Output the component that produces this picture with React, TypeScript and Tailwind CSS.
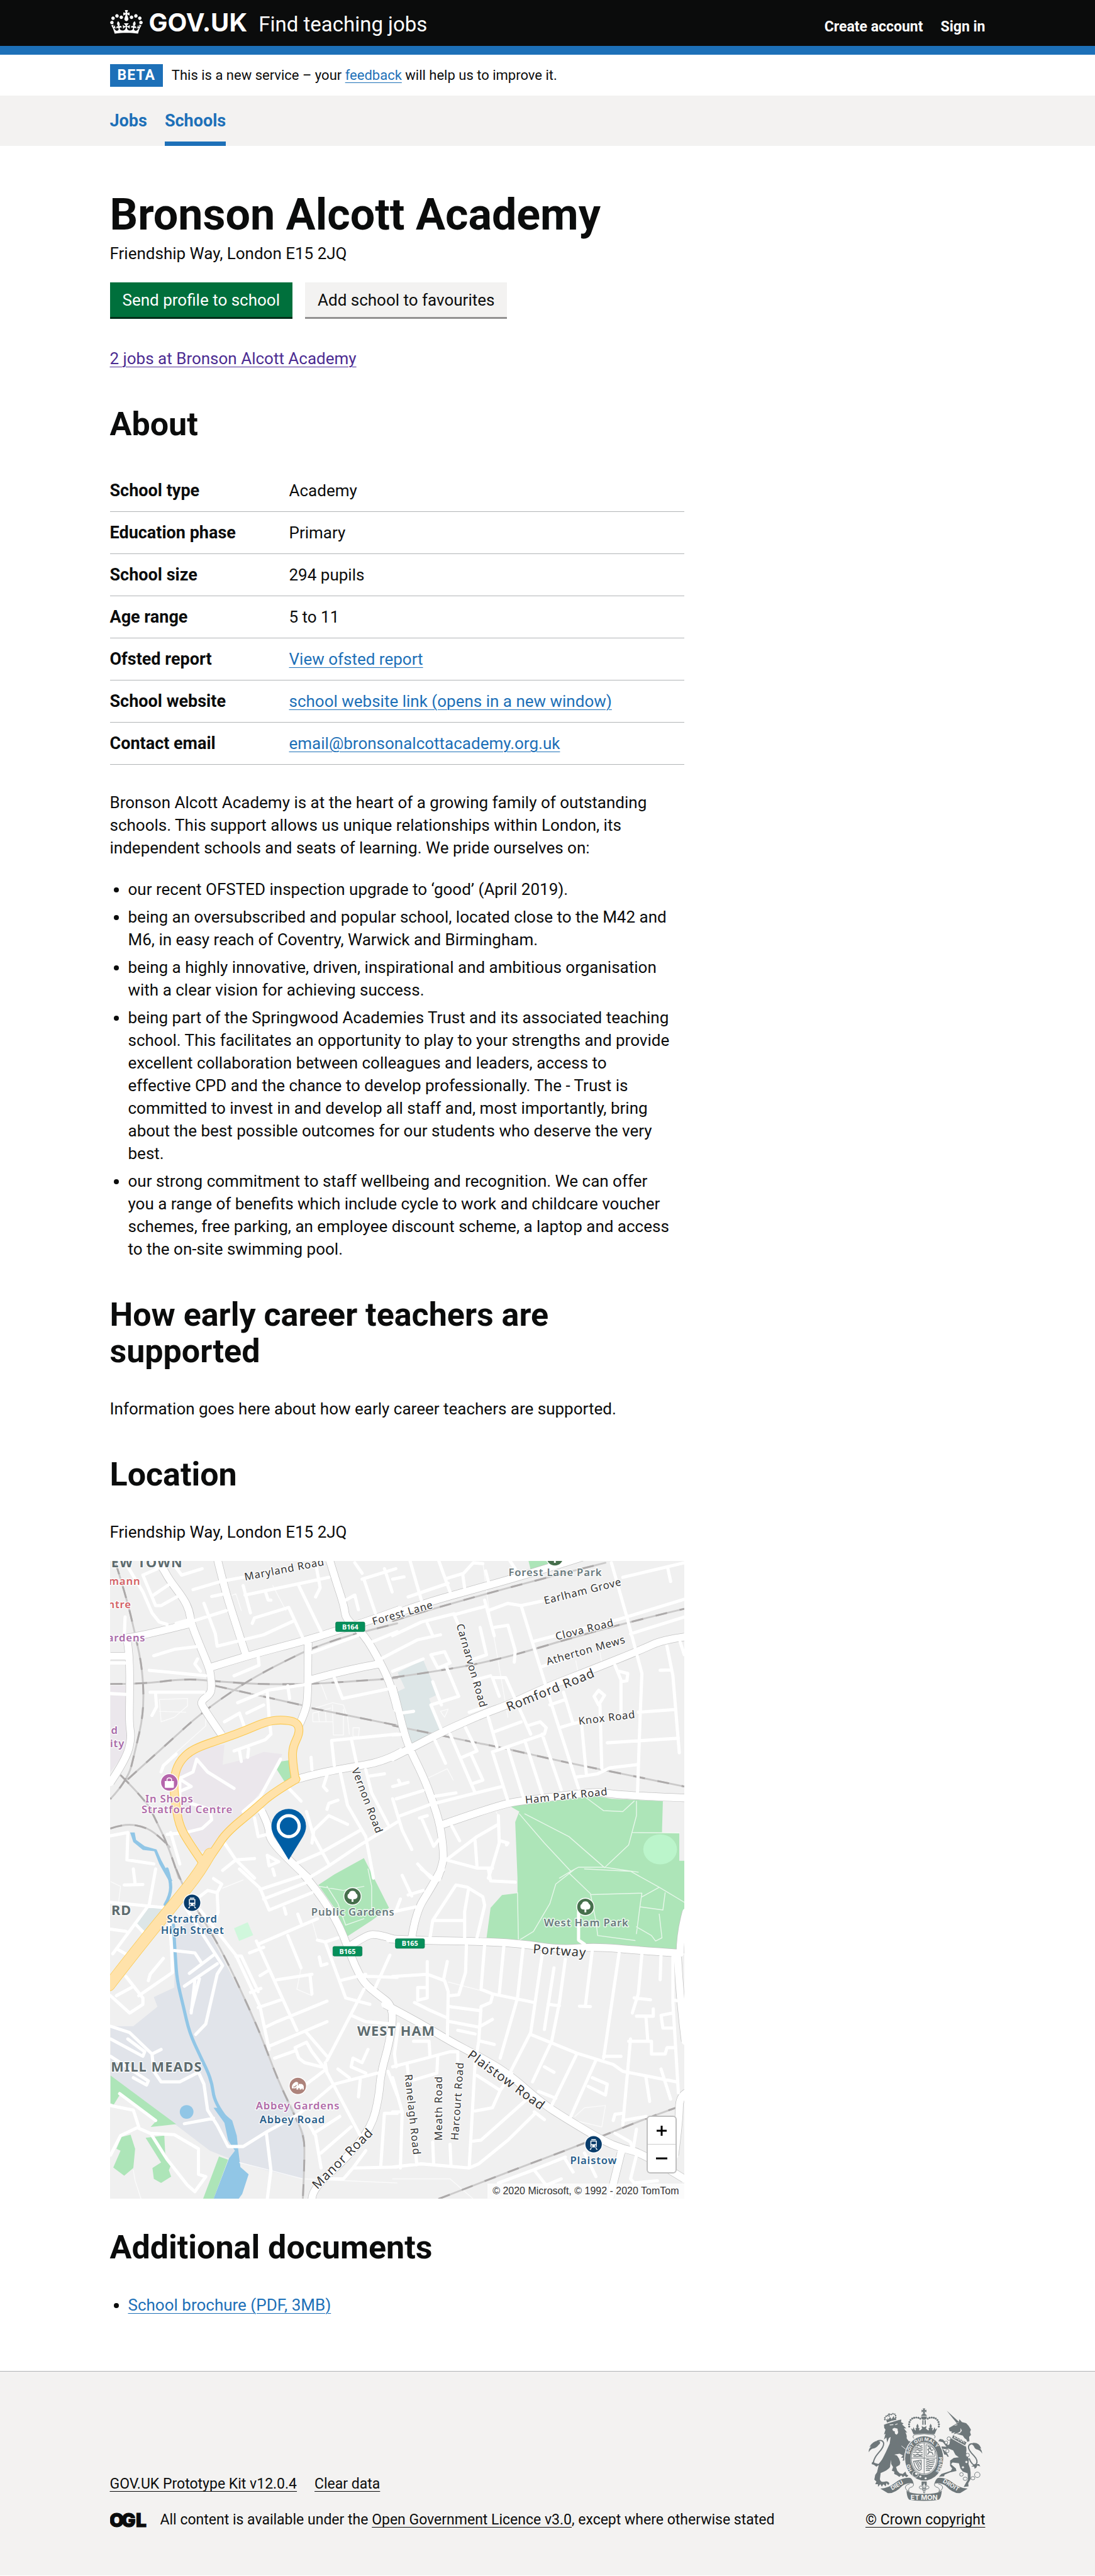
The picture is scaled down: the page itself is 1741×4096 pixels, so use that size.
import React from "react";

/* ---------- Street map ---------- */

type Tile = "nw" | "ne" | "sw" | "se";

const TILES: Record<Tile, [number, number, number, number]> = {
  nw: [-10, -24, 0.40816, 0.45918],
  ne: [620, -24, 0.42092, 0.45918],
  sw: [-10, 676, 0.40816, 0.47194],
  se: [620, 676, 0.42092, 0.47194],
};

function place(tile: Tile, x: number, y: number): [number, number] {
  const [ox, oy, sx, sy] = TILES[tile];
  return [Math.round(ox + x * sx), Math.round(oy + y * sy)];
}

function points(tile: Tile, text: string): [number, number][] {
  return text.split(" ").map((pair) => {
    const [x, y] = pair.split(",").map(Number);
    return place(tile, x, y);
  });
}

function straight(tile: Tile, text: string) {
  return points(tile, text)
    .map(([x, y], i) => `${i ? "L" : "M"}${x} ${y}`)
    .join("");
}

function smooth(tile: Tile, text: string) {
  const p = points(tile, text);
  let d = `M${p[0][0]} ${p[0][1]}`;
  for (let i = 1; i < p.length - 1; i++) {
    const mx = (p[i][0] + p[i + 1][0]) / 2;
    const my = (p[i][1] + p[i + 1][1]) / 2;
    d += `Q${p[i][0]} ${p[i][1]} ${i === p.length - 2 ? `${p[i + 1][0]} ${p[i + 1][1]}` : `${mx} ${my}`}`;
  }
  if (p.length === 2) d += `L${p[1][0]} ${p[1][1]}`;
  return d;
}

type Shapes = Partial<Record<Tile, string[]>>;

function all(shapes: Shapes, draw: (tile: Tile, text: string) => string) {
  return (Object.keys(shapes) as Tile[])
    .flatMap((tile) => shapes[tile]!.map((text) => draw(tile, text)))
    .join("");
}

const AREAS: { fill: string; shapes: Shapes }[] = [
  {
    fill: "#ebe7ec",
    shapes: {
      nw: [
        "420,1000 500,950 640,930 630,1025 750,1000 850,965 950,975 900,1080 760,1240 640,1350 560,1440 510,1440 430,1330 390,1200 385,1080",
        "28,650 105,650 120,950 28,1060",
      ],
    },
  },
  {
    fill: "#e1e4ea",
    shapes: {
      sw: [
        "370,300 480,220 560,300 640,430 800,700 900,930 1020,1130 1070,1240 1060,1440 880,1405 720,1365 560,1310 380,1190 28,960 28,730 150,730 280,640 260,595 370,550",
      ],
    },
  },
  {
    fill: "#dde6e7",
    shapes: {
      ne: ["25,585 160,525 235,690 190,710 255,865 95,930 20,680 65,660"],
      sw: ["165,250 225,178 320,180 310,240 215,295"],
    },
  },
  {
    fill: "#ade5b8",
    shapes: {
      nw: ["920,1050 945,1010 990,1005 1005,1090 965,1110"],
      ne: [
        "610,1225 700,1210 1060,1175 1140,1190 1410,1200 1405,1350 1495,1352 1495,1485 1520,1485 1520,1568 650,1568 640,1300 660,1250",
        "708,50 870,50 720,95",
      ],
      sw: [
        "1145,75 1230,25 1390,-50 1525,180 1430,240 1295,315 1230,180",
        "28,960 380,1187 243,1200 275,1170 80,1045 45,1095 28,1090",
        "85,1245 135,1235 160,1300 150,1390 100,1425 42,1388 80,1310 60,1300",
        "215,1250 315,1240 320,1320 350,1380 340,1400 352,1430 300,1460 260,1440 252,1390 300,1365",
        "610,1338 660,1352 580,1534 525,1534",
      ],
      se: ["650,-5 1520,-5 1520,210 1485,378 1060,350 910,362 650,330 490,322 510,180 570,120 650,112"],
    },
  },
  { fill: "#d0f7dc", shapes: { sw: ["690,275 765,248 795,308 718,335"] } },
  {
    fill: "#91c6e6",
    shapes: {
      nw: ["133,1350 158,1350 165,1385 210,1415 275,1430 300,1480 360,1580 340,1580 290,1500 262,1440 200,1432 150,1395"],
      sw: ["600,1110 680,1170 705,1240 712,1300 725,1385 770,1420 735,1510 715,1534 580,1534 665,1345 695,1310 660,1260 640,1180 580,1110"],
    },
  },
];

const RIVER: Shapes = {
  sw: ["330,0 350,50 350,120 320,165", "365,260 375,400 385,520 420,640 450,760 510,870 570,980 585,1090 650,1160"],
};

const RAIL: Shapes = {
  nw: [
    "28,640 200,640 430,615 620,630 850,642 1100,640 1300,630 1568,612",
    "590,650 800,690 1060,742",
    "1110,755 1300,790 1568,838",
    "120,1095 350,910 520,775 730,645 900,560 1060,490 1110,470 1250,425 1390,390 1568,350",
    "55,60 110,220 160,400 200,580 205,780 160,960 120,1100 28,1190",
    "80,1075 220,1200 270,1290 340,1420 395,1568",
    "28,1330 100,1308 200,1320 280,1360 345,1420",
  ],
  ne: [
    "0,838 220,880 400,915 550,940 900,1015 1280,1085 1520,1130",
    "0,340 460,210 1110,60",
    "0,610 300,570 560,520 750,470 900,430 1250,340 1520,280",
  ],
  sw: ["380,0 430,110 500,200 620,370 720,550 830,760 920,970 1020,1150 1060,1230 1072,1310 1062,1534"],
  se: ["240,1534 600,1410 1000,1275 1320,1160 1475,1110"],
};

const MAJOR: Shapes = {
  nw: [
    "270,40 310,90 340,140 420,230 450,290 460,350 500,440 555,560 565,600 570,660 560,690 515,720 520,750 625,885",
    "110,420 200,410 440,355",
    "115,420 130,500 130,700 128,830 140,900 110,1000 28,1110",
    "28,507 110,507",
    "600,40 640,180 680,300 755,500",
    "1205,50 1240,150 1285,270 1290,330 1390,400 1480,540 1540,660 1568,760",
    "560,562 760,505 1090,430 1240,385 1400,345 1580,285",
    "1090,430 1088,500 1088,700 1075,770 1040,840",
    "1100,620 1280,575 1470,545",
    "1030,1095 1130,1070 1300,1040 1500,1010 1590,965",
    "840,1250 880,1320 880,1380 985,1480 1090,1568",
  ],
  ne: [
    "0,310 160,255 480,175 800,90 1000,30",
    "0,990 100,945 260,870 480,780 600,740 800,655 1060,565 1290,480 1410,430 1520,415",
    "0,660 20,720 50,840 85,945 160,1080 210,1200 250,1320 265,1450 262,1500 235,1568",
    "250,1315 560,1215 700,1195 1060,1155 1130,1165 1280,1175 1520,1185",
  ],
  sw: [
    "1050,10 1120,80 1200,180 1260,270 1300,360 1340,450 1390,530 1460,580 1550,640 1530,800 1480,950 1470,1060 1430,1200 1300,1340 1110,1490 1110,1534",
    "1310,360 1400,310 1460,300 1568,330",
  ],
  se: [
    "255,0 200,90 120,200 100,320",
    "-20,325 170,332 400,335 660,345 880,375 1050,360 1300,380 1500,392",
    "-40,630 130,710 300,800 450,870 600,950 780,1090 900,1160 1100,1265 1200,1300 1300,1320 1520,1440",
    "1500,392 1500,300 1530,200",
    "1485,400 1500,620 1525,800",
    "1530,1040 1495,1060 1495,1160 1470,1330",
    "1190,1320 1130,1534",
  ],
};

const TRUNK: Shapes = {
  nw: [
    "1022,1098 1020,1090 1005,1000 1008,940 1045,870 1030,820 940,810 860,820 760,860 640,900 520,935 440,970 385,1030 365,1110 375,1200 395,1310 440,1390 520,1490",
    "1025,1095 900,1160 800,1240 650,1350 590,1430 520,1520",
  ],
};

const TRUNK_WIDE: Shapes = { sw: ["560,-70 510,10 380,150 200,340 20,540"] };

const MINOR: Shapes = {
  nw: [
    "28,540 115,540", "28,685 115,690", "120,80 200,200 250,300 290,345 330,355", "200,120 280,90 240,40",
    "200,120 270,265 300,265 400,215", "250,220 340,165", "380,350 440,335", "470,340 650,290",
    "470,190 620,150 740,130", "570,222 640,210", "530,255 590,400 600,460 850,405 1010,340",
    "360,60 410,120 520,90", "740,170 780,300", "750,215 1200,130", "860,200 875,240 890,240",
    "1130,60 1155,180 1130,225", "1040,170 1160,390", "790,350 800,325 985,275 1060,420",
    "260,505 370,475 490,462", "235,575 540,600", "495,520 480,545 510,580", "820,510 825,550 690,600",
    "240,680 530,680", "270,690 275,750 250,790", "710,730 870,670 1090,640", "760,780 850,740",
    "870,680 880,800 890,880 860,905 690,960", "980,650 990,710", "640,820 720,780 745,840",
    "720,960 730,1010", "770,950 765,990", "1110,490 1380,400", "1230,610 1275,710 1520,665",
    "1340,60 1380,110", "1380,140 1560,90", "1390,140 1450,300", "1500,90 1540,200",
    "1290,240 1340,215 1360,285", "1430,440 1568,390", "1480,520 1568,480", "1215,910 1568,880",
    "1215,910 1230,1030", "1320,900 1350,1020", "1105,990 1110,1050",
    "1260,1050 1300,1220 1400,1370 1415,1450 1440,1568", "1400,1050 1430,1160 1520,1310",
    "1420,1080 1500,1070", "1190,1075 1170,1130 1190,1150", "1568,1300 1350,1420 1200,1510 1090,1568",
    "1370,1340 1150,1450 1020,1500", "1120,1370 1200,1500", "1110,1400 1120,1340 1200,1270 1300,1310",
    "1190,1240 1200,1210 1250,1195", "640,1400 700,1480 800,1568", "870,1460 930,1490 880,1510 870,1460",
    "985,1140 1050,1200", "1080,1250 1120,1370", "800,1280 820,1370 870,1360", "700,1480 800,1475",
    "28,1365 120,1350 115,1480 260,1500", "350,1350 400,1500",
    "330,1360 430,1350 520,1330 570,1290 560,1240 460,1210", "400,1180 400,1090 470,1060 490,1000 550,1060 690,1140",
    "300,1060 310,1030 380,975", "410,1100 460,1130 410,1150", "940,1000 830,1180 740,1250",
    "630,1530 700,1480", "100,420 105,320",
  ],
  ne: [
    "90,50 150,240", "0,140 60,128", "80,225 290,160", "240,50 300,200", "285,135 370,110 420,60 470,65",
    "365,120 375,180", "485,100 500,150", "610,50 640,90", "0,410 150,345 320,305",
    "180,350 210,410", "250,405 130,430 0,490", "320,310 480,270", "320,310 340,350", "480,240 530,410",
    "500,290 600,255 670,265 780,245", "670,265 830,740 970,1140", "1140,60 1220,320 1300,590 1290,800 1275,1180",
    "1200,130 1520,60", "1435,90 1450,150", "740,435 1180,330 1520,235", "1240,400 1520,320", "770,560 900,520",
    "0,580 160,520", "200,500 270,485 300,540 235,565 200,500", "280,560 345,700 200,740 255,860",
    "210,630 255,740", "455,370 490,500 400,530", "530,370 600,360 640,480 635,535", "430,620 510,600",
    "555,700 520,610 590,610 720,880", "400,775 480,750", "500,800 545,940", "380,850 440,960 360,990",
    "300,880 430,1160", "410,980 470,1100 420,1115", "220,910 275,1020", "600,1200 520,965 790,880 800,850 770,820 700,840",
    "530,870 670,820", "600,945 680,1175", "690,910 780,1165", "780,880 880,1145", "820,740 900,715",
    "890,680 940,830 870,850", "940,830 980,820", "985,840 1010,1070", "1080,740 1090,1045",
    "1075,740 1050,700 1075,670 1105,695 1075,740", "960,1085 1070,1070 1130,1040 1270,1025",
    "1160,550 1190,620 1190,780", "1180,580 1225,590 1220,625 1190,630", "1280,775 1470,762",
    "1120,922 1490,900", "1430,460 1460,600 1495,970", "1395,575 1450,572", "1500,440 1520,500",
    "40,780 110,770", "0,885 60,880", "0,1130 80,1110", "30,1100 40,1120", "20,1190 160,1150",
    "0,1190 50,1340 100,1430", "40,1270 200,1215 570,1130", "200,1180 330,1160", "310,1320 350,1390",
    "140,1280 180,1270", "155,1290 215,1415 240,1385", "280,1480 440,1370 550,1310",
    "550,1270 555,1400 520,1510 500,1568", "280,1480 440,1520 520,1520", "430,1390 440,1510",
    "560,1390 600,1400 595,1410", "130,1500 200,1568",
  ],
  sw: [
    "28,155 320,180", "150,0 160,70", "100,75 200,72", "270,0 235,165 40,395", "160,255 210,300",
    "28,280 110,290", "60,370 120,400", "345,250 355,380 360,480 180,590", "230,520 240,490 310,415",
    "28,590 130,670 200,630 200,600 110,500", "140,550 60,590", "370,380 480,390 515,435", "450,485 580,400",
    "430,180 630,450 600,490 540,720 485,770", "510,190 700,400 830,640 880,840",
    "580,45 625,70 600,110 605,200 590,240", "505,130 550,100 600,110", "700,405 730,405 820,570",
    "780,575 835,555", "720,0 830,90 880,190 1110,110", "830,95 1060,30", "850,140 1090,60", "900,0 910,30",
    "960,180 970,210", "820,350 1140,230", "1035,210 1050,250", "810,335 1030,750", "775,390 850,365",
    "980,310 1050,460", "830,495 880,470", "920,515 1110,490", "820,645 950,605", "860,735 920,710 1190,615",
    "880,825 1070,755 1190,710", "910,880 1020,845", "1160,920 1070,900 1040,880 1020,830 1080,805 1110,850 1180,930 1370,1240",
    "1080,760 1190,870", "1190,890 1390,560", "1180,900 1190,950", "1080,1000 1170,940",
    "1040,1140 1230,1000 1460,950", "1090,1180 1130,1240 1160,1390", "1120,1230 1260,1150", "1160,1320 1320,1200",
    "1140,330 1180,340 1290,600 1420,630", "1180,340 1250,320", "1150,410 1160,450 1190,440", "1260,520 1400,490",
    "1320,680 1400,710 1540,720", "1370,500 1440,500 1568,505", "1530,400 1450,550", "1250,930 1310,970",
    "1410,840 1380,900 1330,880 1320,920 1400,950", "1370,980 1360,1060", "1568,1135 1500,1135 1480,1380",
    "1330,1390 1568,1385", "1400,1310 1330,1390 1280,1440 1180,1440", "1520,940 1568,1050",
    "28,730 130,760 250,860 300,840", "28,790 200,870 210,850 120,790", "250,860 260,940 300,990 400,990 490,950",
    "28,870 230,985 220,1005 150,970", "500,945 530,1000 550,1120 600,1190 660,1290 740,1290 870,1220 1040,1140",
    "425,1185 580,1160", "865,1230 890,1400 870,1534", "28,1100 150,1120 180,1200 80,1240 28,1330",
    "180,1205 240,1230 370,1235 500,1300 500,1420 540,1430 480,1500 440,1470 330,1350 250,1240", "75,1045 270,1170",
    "425,545 600,440", "480,520 460,670", "505,510 460,660", "1100,500 1110,580",
  ],
  se: [
    "50,30 100,125", "0,200 120,175", "20,190 40,140", "80,120 160,100", "150,0 230,55", "500,0 510,55 640,62",
    "195,320 210,240 330,75 390,85 470,130 480,170 440,320", "395,100 375,200 375,330", "220,240 370,240",
    "385,350 380,480 345,585 300,590", "0,500 180,490 270,520 290,570 285,790", "180,430 180,600 130,610 130,550 180,550",
    "115,620 200,660 280,690", "285,430 265,510", "480,350 460,560 520,580 740,620", "580,360 555,580",
    "680,370 650,600 560,880", "780,400 720,760 610,950", "840,460 790,745", "900,420 870,620 830,800 730,990",
    "810,630 870,635", "1040,380 1005,635", "975,638 1030,640", "1180,390 1100,880", "1100,870 1190,870",
    "1300,395 1280,580 1250,670", "1260,600 1345,608", "1400,395 1395,515", "1460,410 1460,620 1480,900 1490,1040",
    "1470,610 1500,615", "720,770 960,855 1150,910 1200,940 1480,990", "960,860 830,1100", "1060,890 930,1150",
    "790,920 840,945", "760,1035 850,1065", "1020,1010 1110,1050 1120,1000 1040,970", "300,640 460,660",
    "300,710 450,735 520,700", "520,590 510,620 460,640 450,800 430,900 400,1390", "340,750 430,768",
    "460,800 530,815", "0,920 130,890 300,850 340,850 340,890", "110,800 190,800 195,870", "110,980 230,950 235,870",
    "75,910 80,950", "0,970 50,1130 40,1390", "0,1130 50,1130", "30,720 10,860 20,920",
    "0,1385 150,1370 400,1390 450,1370 600,1260 740,1140", "440,960 560,1030 520,1110 430,1125", "560,1030 620,950",
    "420,1265 460,1260 700,1070", "740,1130 790,1165", "210,1270 215,1370", "300,1280 305,1375",
    "1230,800 1350,800 1350,860 1420,860 1430,830 1470,830", "1240,790 1200,1190", "1270,685 1360,685 1360,650",
    "1320,690 1330,800", "1460,670 1400,680 1410,740 1460,740", "1320,970 1340,1080", "1400,930 1450,1070",
    "1150,1170 1160,1140 1200,1135", "1200,1170 1320,1150", "1160,1230 1240,1270 1250,1300", "1270,1210 1255,1300",
    "1270,1330 1240,1440 1260,1460 1380,1450", "550,1460 730,1400 900,1340", "740,1400 800,1470 880,1440",
    "900,1350 940,1410", "1000,1320 1060,1430", "120,1330 125,1375", "970,200 970,330 1000,350",
  ],
};

const PATHS: Shapes = {
  nw: [
    "290,715 440,710 440,745 370,800 300,820 290,715", "290,770 430,775", "1115,820 1115,780 1210,755",
    "1110,760 1220,730 1280,740 1300,800 1310,880", "1220,740 1225,885 1280,885 1280,760", "1115,820 1220,820",
    "1145,770 1150,820", "1180,765 1185,820", "1160,640 1190,715", "1330,850 1365,850 1360,890 1330,890 1330,850",
    "900,170 970,290", "540,780 540,840 350,990", "640,230 700,210 730,290",
  ],
  ne: [
    "690,1260 920,1370 1105,1518 1230,1410 1270,1270 1270,1200", "660,1260 790,1400 930,1535 870,1568",
    "1010,1185 1100,1245 1200,1250 1260,1200", "1250,1350 1495,1352", "930,1535 970,1515 1105,1515 1280,1540",
    "470,60 500,260 600,800", "170,1095 285,1045 315,1100", "955,530 970,600", "1080,490 1090,540",
    "250,770 290,760 270,800 250,770", "540,1250 550,1270",
  ],
  se: [
    "660,330 735,290 820,160 850,70 950,0", "920,20 1030,115 1060,240 1070,310 1265,332",
    "1035,118 1300,112 1290,170 1270,300", "1000,0 1240,10 1390,85 1520,155", "1390,85 1300,130",
    "1420,110 1410,190 1290,175", "1270,270 1350,310 1370,335 1405,320 1390,210", "650,110 655,330",
    "950,1150 1000,1110 1110,1100 1090,1200 950,1170", "0,1440 300,1440 420,1534", "290,525 480,570",
  ],
  sw: [
    "1150,80 1280,100 1390,80", "1410,0 1430,80 1430,180", "1190,80 1250,160 1290,260 1390,230",
    "630,90 740,50", "1110,240 1140,330", "30,60 80,80 70,150", "1050,460 1030,560 1110,590",
    "150,1400 160,1450 190,1534", "720,1365 1060,1440 1568,1460",
  ],
};

type Label = {
  tile: Tile;
  text: string;
  from: [number, number];
  to: [number, number];
  size?: number;
  color?: string;
  weight?: number;
};

const LABELS: Label[] = [
  { tile: "nw", text: "EW TOWN", from: [24, 82], to: [420, 82], size: 30, color: "#5d6b6e", weight: 700 },
  { tile: "nw", text: "Maryland Road", from: [742, 147], to: [1187, 70] },
  { tile: "nw", text: "Forest Lane", from: [1428, 362], to: [1775, 275] },
  { tile: "nw", text: "Vernon Road", from: [1320, 1045], to: [1455, 1362] },
  { tile: "nw", text: "mann", from: [34, 165], to: [172, 165], color: "#d45f63", weight: 600 },
  { tile: "nw", text: "ntre", from: [30, 277], to: [122, 277], color: "#d45f63", weight: 600 },
  { tile: "nw", text: "ardens", from: [32, 438], to: [194, 438], color: "#a869a8", weight: 600 },
  { tile: "nw", text: "d", from: [30, 880], to: [68, 880], color: "#a869a8", weight: 600 },
  { tile: "nw", text: "ity", from: [30, 940], to: [98, 940], color: "#a869a8", weight: 600 },
  { tile: "nw", text: "In Shops", from: [225, 1206], to: [460, 1206], color: "#b06ba9", weight: 600 },
  { tile: "nw", text: "Stratford Centre", from: [217, 1258], to: [660, 1258], color: "#b06ba9", weight: 600 },
  { tile: "ne", text: "Forest Lane Park", from: [625, 125], to: [1068, 125], color: "#68797d", weight: 600 },
  { tile: "ne", text: "Earlham Grove", from: [790, 262], to: [1198, 165] },
  { tile: "ne", text: "Clova Road", from: [848, 432], to: [1160, 360] },
  { tile: "ne", text: "Atherton Mews", from: [803, 552], to: [1222, 440] },
  { tile: "ne", text: "Romford Road", from: [605, 772], to: [1058, 606], size: 28 },
  { tile: "ne", text: "Knox Road", from: [968, 836], to: [1270, 802] },
  { tile: "ne", text: "Carnarvon Road", from: [330, 352], to: [458, 760] },
  { tile: "ne", text: "Ham Park Road", from: [685, 1212], to: [1128, 1170] },
  { tile: "sw", text: "RD", from: [30, 213], to: [140, 213], size: 30, color: "#5d6b6e", weight: 700 },
  { tile: "sw", text: "MILL MEADS", from: [32, 940], to: [518, 940], size: 30, color: "#5d6b6e", weight: 700 },
  { tile: "sw", text: "WEST HAM", from: [1332, 776], to: [1792, 776], size: 30, color: "#5d6b6e", weight: 700 },
  { tile: "sw", text: "Stratford", from: [343, 247], to: [588, 247], color: "#285f8c", weight: 600 },
  { tile: "sw", text: "High Street", from: [314, 302], to: [622, 302], color: "#285f8c", weight: 600 },
  { tile: "sw", text: "Public Gardens", from: [1125, 218], to: [1535, 218], color: "#68797d", weight: 600 },
  { tile: "sw", text: "Abbey Gardens", from: [826, 1116], to: [1242, 1116], color: "#b06ba9", weight: 600 },
  { tile: "sw", text: "Abbey Road", from: [838, 1182], to: [1168, 1182], color: "#285f8c", weight: 600 },
  { tile: "sw", text: "Manor Road", from: [1140, 1490], to: [1440, 1228], size: 28 },
  { tile: "se", text: "West Ham Park", from: [805, 268], to: [1212, 268], color: "#68797d", weight: 600 },
  { tile: "se", text: "Portway", from: [715, 392], to: [1022, 408], size: 28 },
  { tile: "se", text: "Plaistow Road", from: [395, 878], to: [765, 1118], size: 28 },
  { tile: "se", text: "Plaistow", from: [938, 1370], to: [1158, 1370], color: "#285f8c", weight: 600 },
  { tile: "se", text: "Ranelagh Road", from: [65, 957], to: [108, 1328] },
  { tile: "se", text: "Meath Road", from: [256, 1268], to: [260, 958] },
  { tile: "se", text: "Harcourt Road", from: [342, 1268], to: [368, 892] },
];

function MapLabel({ tile, text, from, to, size = 23, color = "#333333", weight = 400 }: Label) {
  const [x1, y1] = place(tile, from[0], from[1]);
  const [x2, y2] = place(tile, to[0], to[1]);
  const x = Math.round((x1 + x2) / 2);
  const y = Math.round((y1 + y2) / 2);
  const angle = Math.round((Math.atan2(y2 - y1, x2 - x1) * 180) / Math.PI);
  return (
    <text
      transform={`translate(${x} ${y}) rotate(${angle})`}
      textAnchor="middle"
      fontSize={size}
      fontWeight={weight}
      fill={color}
      stroke="#ffffff"
      strokeWidth="4"
      strokeOpacity="0.8"
      strokeLinejoin="round"
      paintOrder="stroke"
      className="tracking-wider"
    >
      {text}
    </text>
  );
}

function Shield({ x, y, text }: { x: number; y: number; text: string }) {
  return (
    <g>
      <rect x={x} y={y} width="64" height="21" rx="3" fill="#058f5a" stroke="#04764a" />
      <text x={x + 32} y={y + 16} textAnchor="middle" fontSize="15" fontWeight="700" fill="#ffffff">
        {text}
      </text>
    </g>
  );
}

function Disc({ x, y, color, children }: { x: number; y: number; color: string; children: React.ReactNode }) {
  return (
    <g transform={`translate(${x} ${y})`}>
      <circle r="19" fill={color} stroke="#ffffff" strokeWidth="2" />
      {children}
    </g>
  );
}

function Train() {
  return (
    <g>
      <path d="M-5 -11H5V-9H-5ZM-7 -8H7V5Q7 7 5 7H-5Q-7 7 -7 5ZM-6 8L-9 12H-6L-4 8ZM6 8L9 12H6L4 8Z" fill="#ffffff" />
      <path d="M-5 -6H5V0H-5Z" fill="#083c6b" />
      <circle cx="-4" cy="4" r="1.5" fill="#083c6b" />
      <circle cx="4" cy="4" r="1.5" fill="#083c6b" />
    </g>
  );
}

function Tree() {
  return (
    <path
      d="M-2 12V6H-5Q-11 5 -11 -1Q-11 -5 -8 -6Q-6 -12 0 -12Q6 -12 8 -6Q11 -5 11 -1Q11 5 5 6H2V12Z"
      fill="#ffffff"
    />
  );
}

function StreetMap() {
  const rail = all(RAIL, smooth);
  const major = all(MAJOR, smooth);
  const trunk = all(TRUNK, smooth);
  const trunkWide = all(TRUNK_WIDE, smooth);
  return (
    <div className="relative w-full overflow-hidden bg-[#f0f0f0]">
      <svg
        viewBox="0 0 1260 1400"
        className="block w-full font-['Noto_Sans',sans-serif]"
        role="img"
        aria-label="Map of the area around Friendship Way, London"
      >
        <rect width="1260" height="1400" fill="#f0f0f0" />
        {AREAS.map((area) => (
          <path key={area.fill} d={all(area.shapes, (t, p) => straight(t, p) + "Z")} fill={area.fill} />
        ))}
        <ellipse cx="1207" cy="633" rx="37" ry="33" fill="#bbf5cb" />
        <ellipse cx="168" cy="1209" rx="15" ry="15" fill="#91c6e6" />
        <g fill="none" strokeLinecap="round" strokeLinejoin="round">
          <path d={all(RIVER, smooth)} stroke="#91c6e6" strokeWidth="7" />
          <path d={all(PATHS, straight)} stroke="#ffffff" strokeWidth="2" strokeOpacity="0.7" />
          <path d={rail} stroke="#cbcaca" strokeWidth="4" />
          <path d={rail} stroke="#aca9a9" strokeWidth="4" strokeDasharray="26 28" strokeLinecap="butt" />
          <path d={major} stroke="#c2c2c2" strokeWidth="18" strokeLinecap="butt" />
          <path d={all(MINOR, straight)} stroke="#ffffff" strokeWidth="7" />
          <path d={major} stroke="#ffffff" strokeWidth="16" />
          <path d={trunk} stroke="#fbc94f" strokeWidth="19" />
          <path d={trunkWide} stroke="#fbc94f" strokeWidth="26" />
          <path d={trunk} stroke="#ffe2aa" strokeWidth="16" />
          <path d={trunkWide} stroke="#ffe2aa" strokeWidth="24" />
        </g>
        <Disc x={130} y={486} color="#b566ac">
          <path d="M-10 -3H10V10Q10 12 8 12H-8Q-10 12 -10 10Z" fill="#ffffff" />
          <path d="M-5 -2V-6Q-5 -10 0 -10Q5 -10 5 -6V-2" fill="none" stroke="#ffffff" strokeWidth="2" />
        </Disc>
        <Disc x={180} y={750} color="#083c6b"><Train /></Disc>
        <Disc x={1061} y={1280} color="#083c6b"><Train /></Disc>
        <Disc x={532} y={736} color="#466f4c"><Tree /></Disc>
        <Disc x={1043} y={759} color="#466f4c"><Tree /></Disc>
        <Disc x={976} y={-8} color="#466f4c"><Tree /></Disc>
        <Disc x={412} y={1152} color="#ad837b">
          <path d="M-13 5Q-14 -2 -9 -6Q-4 -11 0 -8L3 -4Q11 -6 13 1V8H10V5L7 8H4V5H1V8H-3V3Q-6 7 -9 5L-11 6Z" fill="#ffffff" />
          <path d="M-10 2Q-5 3 -3 -2M1 -7V-1" fill="none" stroke="#ad837b" strokeWidth="1.5" />
        </Disc>
        {LABELS.map((label) => (
          <MapLabel key={label.tile + label.text} {...label} />
        ))}
        <Shield x={495} y={134} text="B164" />
        <Shield x={489} y={846} text="B165" />
        <Shield x={626} y={829} text="B165" />
        <path d="M392 656L361 605Q354 593 354 582A38 38 0 0 1 430 582Q430 593 423 605Z" fill="#005ea5" />
        <circle cx="392" cy="582" r="23" fill="none" stroke="#ffffff" strokeWidth="7" />
      </svg>
      <div className="absolute right-3 bottom-10 flex flex-col overflow-hidden rounded-md border-2 border-[#bfbfbf] bg-white">
        <button type="button" aria-label="Zoom in" className="flex h-11 w-11 items-center justify-center border-b border-[#cccccc]">
          <svg viewBox="0 0 18 18" className="h-[18px] w-[18px]"><path d="M9 1V17M1 9H17" stroke="#000000" strokeWidth="3" /></svg>
        </button>
        <button type="button" aria-label="Zoom out" className="flex h-11 w-11 items-center justify-center">
          <svg viewBox="0 0 18 18" className="h-[18px] w-[18px]"><path d="M0 9H18" stroke="#000000" strokeWidth="3" /></svg>
        </button>
      </div>
      <p className="absolute right-0 bottom-0 bg-white/70 px-2 font-['Liberation_Sans',sans-serif] text-base leading-6 text-[#333333]">
        © 2020 Microsoft, © 1992 - 2020 TomTom
      </p>
    </div>
  );
}

/* ---------- Crest ---------- */

function Crest() {
  const ink = "#6e777a";
  const paper = "#f3f2f1";
  const pearls = [[429, 252], [428, 237], [431, 222], [438, 209], [449, 199], [462, 194], [476, 192], [490, 194], [502, 200]];
  return (
    <svg viewBox="160 130 754 616" className="h-[148px] w-[181px] font-['Inter',sans-serif]" role="img" aria-label="Royal coat of arms">
      <g fill={ink}>
        {/* crown */}
        <path d="M519 132H535L531 145L543 140V158L531 152L535 166H519L523 152L511 158V140L523 145Z" />
        <path d="M508 182Q512 167 527 167Q542 167 546 182Z" />
        <path d="M508 186H546Q546 204 534 207H520Q508 204 508 186Z" />
        <path d="M516 210H524V240H516ZM531 210H539V240H531Z" />
        {pearls.flatMap(([x, y]) => [
          <circle key={`l${x}-${y}`} cx={x} cy={y} r="6.5" />,
          <circle key={`r${x}-${y}`} cx={1054 - x} cy={y} r="6.5" />,
        ])}
        <path d="M440 262L452 272L458 256L466 275Q478 282 470 266Q474 256 480 262L476 250L484 233L492 250L488 262Q496 256 498 266Q490 282 504 276L516 264L512 258V248L524 256H531L543 248V258L539 264L551 276Q565 282 557 266Q560 256 567 262L563 250L571 233L579 250L575 262Q583 256 585 266Q577 282 589 275L597 256L603 272L615 262L603 290L597 304Q527 292 458 304L452 290Z" />
        <path d="M466 306Q527 294 589 306Q603 312 601 322Q598 330 588 334" fill="none" stroke={ink} strokeWidth="4" />
        <path d="M466 306Q452 312 454 322Q457 330 467 334" fill="none" stroke={ink} strokeWidth="4" />

        {/* lion */}
        <path d="M282 226L276 204Q304 214 340 194L344 208Q312 212 282 226Z" />
        <path d="M296 164V188M288 171H304" stroke={ink} strokeWidth="6" />
        {[[268, 206], [268, 194], [276, 184], [286, 180], [310, 172], [321, 167], [333, 170], [339, 180], [340, 192]].map(([x, y]) => (
          <circle key={`${x}-${y}`} cx={x} cy={y} r="5" />
        ))}
        <path d="M284 190L292 206L302 188L312 204L326 182L332 200L290 214Z" />
        <path d="M262 240L284 232L360 209L377 206L375 222L392 232L382 238L410 264L394 264L416 292L404 290Q416 312 412 330L425 348L440 350L420 385L412 420L440 450L436 480L426 490L412 480L404 492L398 476L386 480L390 460L375 458L388 443L365 432L330 438L348 444L362 465L370 490L366 506L342 520L350 545L366 562L386 566L404 550L412 570L424 576L412 588L398 578L388 588L376 574L364 586L348 574L330 566L330 550L314 544L322 520L310 500L308 472L302 520Q290 540 240 560L235 600Q240 622 262 618Q290 608 298 630L290 640L278 626L274 648L258 634L248 650L238 634L222 652L222 634L204 634L212 616L198 604L204 572L216 555L228 505L250 470L275 420L300 365L306 320L294 330L283 358L278 325L262 338L272 300L262 305L272 272L264 262Z" />
        <path d="M264 458Q240 492 226 505Q200 512 192 490Q196 460 226 426Q262 388 260 362Q252 334 214 350" fill="none" stroke={ink} strokeWidth="8" />
        <path d="M162 422Q158 400 178 384L166 388Q188 346 226 348Q248 356 226 374Q210 396 186 398Q170 404 162 422Z" />
        <path d="M184 486L204 494L232 502L212 518L196 506L180 500Z" />

        {/* unicorn */}
        <path d="M678 147L758 220L744 230Z" />
        <path d="M692 262L736 236L756 224L762 204L778 222L806 230L822 246L838 272L832 288L838 308L826 320L828 348L814 354L808 338L796 330L784 312L740 300L764 296L778 280L770 262L768 284L752 294L722 304L734 290L708 296L712 286L696 282Z" />
        <path d="M712 320L802 378Q812 398 806 424L824 470L822 500Q836 530 836 558V600L820 628L822 648L790 652L802 630L818 604L816 562L784 550L768 530L758 495L716 490L706 502L738 530L742 546L700 556L664 570L660 582L626 584L642 566L705 545L714 530L700 512V478L724 460L758 456L736 440L720 410L690 398L668 402L650 398L680 430L692 452L682 452L676 440L660 436L656 420L636 396L644 384L676 386L652 356L622 348L632 334L652 338L672 358L686 376L696 368L700 340Z" />
        <path d="M826 462Q850 520 872 502Q890 480 858 446Q818 406 822 384Q830 356 868 372" fill="none" stroke={ink} strokeWidth="8" />
        <path d="M912 432Q912 408 896 396L906 398Q894 358 854 360Q836 366 856 380Q862 402 884 406Q902 412 912 432Z" />
        <path d="M840 516L868 502L892 500L900 516L880 510L874 524L862 532L860 518Z" />
        <g fill={paper} stroke={ink} strokeWidth="4">
          <circle cx="692" cy="332" r="12" />
          <circle cx="674" cy="358" r="10" />
          <circle cx="682" cy="414" r="11" />
          <circle cx="816" cy="441" r="12" />
          <circle cx="808" cy="487" r="9" />
          <circle cx="785" cy="522" r="9" />
        </g>
        <g fill="none" stroke={ink} strokeWidth="4">
          <circle cx="775" cy="569" r="12" />
          <ellipse cx="800" cy="598" rx="14" ry="11" />
          <ellipse cx="851" cy="594" rx="13" ry="11" />
          <circle cx="880" cy="572" r="18" />
        </g>

        {/* garter and shield */}
        <ellipse cx="528" cy="463" rx="132" ry="153" fill={paper} />
        <ellipse cx="528" cy="463" rx="126" ry="147" />
        <ellipse cx="528" cy="463" rx="90" ry="109" fill={paper} />
        <ellipse cx="528" cy="463" rx="85" ry="104" fill="none" stroke={ink} strokeWidth="4" />
        <path d="M528 359V567M443 461H613" stroke={ink} strokeWidth="4" />
        <path
          d="M480 382L492 376L504 384L516 378M468 396L482 392L494 398L518 392M462 408H474L484 404L496 410L518 406M456 424L470 420L486 426L500 420L518 426M454 438L470 442L484 436L500 442L518 438M456 450L480 452L500 448L518 452"
          fill="none"
          stroke={ink}
          strokeWidth="6"
          strokeLinejoin="round"
        />
        <path
          d="M540 474L552 470L566 476L600 472M540 488L556 484L570 490L598 486M540 502L554 498L568 504L594 500M540 516L556 512L570 518L588 514M540 530L552 526L564 532L580 528M540 542L554 540L566 544"
          fill="none"
          stroke={ink}
          strokeWidth="6"
          strokeLinejoin="round"
        />
        <path d="M540 372Q584 380 600 410V448H540Z" fill="none" stroke={ink} strokeWidth="4" />
        <path d="M550 438L562 420L552 404L566 396L576 410L590 406M562 420L580 424L588 440M552 384L566 388L572 400" fill="none" stroke={ink} strokeWidth="6" />
        <path d="M458 482L508 474V536L494 544Q466 530 458 482ZM470 484L496 534M480 482L500 520M490 480L506 504" fill="none" stroke={ink} strokeWidth="5" />
        <path id="garter" d="M430 437A102 122 0 0 1 630 455" fill="none" />
        <path id="garter-right" d="M624 455A96 116 0 0 1 586 574" fill="none" />
        <path id="garter-left" d="M464 560A96 116 0 0 1 430 470" fill="none" />
        <g fill={paper} fontWeight="700" fontSize="31">
          <text><textPath href="#garter">SOIT QUI MAL Y</textPath></text>
          <text><textPath href="#garter-right">PENSE</textPath></text>
          <text><textPath href="#garter-left" startOffset="22">HO</textPath></text>
        </g>
        <circle cx="470" cy="568" r="20" stroke={paper} strokeWidth="4" />
        <circle cx="476" cy="564" r="8" fill={paper} />
        <circle cx="503" cy="583" r="7" fill={paper} />
        <circle cx="538" cy="595" r="7" fill={paper} />

        {/* pendant */}
        <path d="M511 616H545V644H511Z" />
        <g fill={paper} stroke={ink} strokeWidth="4">
          <path d="M528 622Q540 640 534 660H522Q516 640 528 622Z" />
          <path d="M520 664Q494 670 496 652Q504 638 518 654ZM536 664Q562 670 560 652Q552 638 538 654Z" />
          <path d="M516 664H540V672H516ZM522 673H534L531 692H525Z" />
        </g>

        {/* ribbon */}
        <path d="M238 663Q292 660 336 624Q384 588 436 592Q452 600 458 630Q420 620 384 644Q330 700 286 692Z" />
        <path d="M816 663Q762 660 718 624Q670 588 620 592Q604 600 596 630Q636 620 670 644Q724 700 768 692Z" />
        <path d="M432 632Q400 640 404 660Q410 676 430 684M456 628Q464 650 436 656Q420 664 428 684" fill="none" stroke={ink} strokeWidth="4" />
        <path d="M622 632Q654 640 650 660Q644 676 624 684M598 628Q590 650 618 656Q634 664 626 684" fill="none" stroke={ink} strokeWidth="4" />
        <path d="M411 676Q440 698 527 698Q614 698 645 676Q642 722 626 736Q600 744 527 744Q454 744 428 736Q414 722 411 676Z" />
        <g fill={paper} fontWeight="700" textAnchor="middle">
          <text x="528" y="736" fontSize="45">ET MON</text>
          <text transform="translate(354 652) rotate(-31)" fontSize="38">DIEU</text>
          <text transform="translate(700 651) rotate(31)" fontSize="38">DROIT</text>
        </g>
      </g>
      <path d="M300 242L324 240M336 240L352 234" stroke={paper} strokeWidth="5" />
      <path d="M318 268Q330 256 342 264Q356 262 352 276Q362 296 346 306Q330 302 334 284Q318 282 318 268Z" fill={paper} />
      <path d="M730 244L748 240M378 380L408 404" stroke={paper} strokeWidth="4" />
      <path d="M718 306L812 356L800 380L710 330Z" fill={ink} stroke={paper} strokeWidth="5" />
      <path d="M726 332L730 318L740 334L748 326L758 344L766 334L776 354L784 342L794 362" fill="none" stroke={paper} strokeWidth="4" />
    </svg>
  );
}

function CrownLogo() {
  return (
    <svg viewBox="0 0 132 97" className="h-[38px] w-[52px] self-start" aria-hidden="true">
      <path
        fill="#ffffff"
        d="M25 30.2c3.5 1.5 7.7-.2 9.1-3.7 1.5-3.6-.2-7.8-3.9-9.2-3.6-1.4-7.6.3-9.1 3.9-1.4 3.5.3 7.5 3.9 9zM9 39.5c3.6 1.5 7.8-.2 9.2-3.7 1.5-3.6-.2-7.8-3.9-9.1-3.6-1.5-7.6.2-9.1 3.8-1.4 3.5.3 7.5 3.8 9zM4.4 57.2c3.5 1.5 7.7-.2 9.1-3.8 1.5-3.6-.2-7.7-3.9-9.1-3.5-1.5-7.6.3-9.1 3.8-1.4 3.5.3 7.6 3.9 9.1zm38.3-21.4c3.5 1.5 7.7-.2 9.1-3.8 1.5-3.6-.2-7.7-3.9-9.1-3.6-1.5-7.6.3-9.1 3.8-1.3 3.6.4 7.7 3.9 9.1zm64.4-5.6c-3.6 1.5-7.8-.2-9.1-3.7-1.5-3.6.2-7.8 3.8-9.2 3.6-1.4 7.7.3 9.2 3.9 1.3 3.5-.4 7.5-3.9 9zm15.9 9.3c-3.6 1.5-7.7-.2-9.1-3.7-1.5-3.6.2-7.8 3.7-9.1 3.6-1.5 7.7.2 9.2 3.8 1.5 3.5-.3 7.5-3.8 9zm4.7 17.7c-3.6 1.5-7.8-.2-9.2-3.8-1.5-3.6.2-7.7 3.9-9.1 3.6-1.5 7.7.3 9.2 3.8 1.3 3.5-.4 7.6-3.9 9.1zM89.3 35.8c-3.6 1.5-7.8-.2-9.2-3.8-1.4-3.6.2-7.7 3.9-9.1 3.6-1.5 7.7.3 9.2 3.8 1.4 3.6-.3 7.7-3.9 9.1zM69.7 17.7l8.9 4.7V9.3l-8.9 2.8c-.2-.3-.5-.6-.9-.9L72.4 0H59.6l3.5 11.2c-.3.3-.6.5-.9.9l-8.8-2.8v13.1l8.8-4.7c.3.3.6.7.9.9l-5 15.4v.1c-.2.8-.4 1.6-.4 2.4 0 4.1 3.1 7.5 7 8.1h.2c.3 0 .7.1 1 .1.4 0 .7 0 1-.1h.2c4-.6 7.1-4.1 7.1-8.1 0-.8-.1-1.7-.4-2.4V34l-5.1-15.4c.4-.2.7-.6 1-.9zM66 92.8c16.9 0 32.8 1.1 47.1 3.2 4-16.9 8.9-26.7 14-33.5l-9.6-3.4c1 4.9 1.1 7.2 0 10.2-1.5-1.4-3-4.3-4.2-8.7L108.6 76c2.8-2 5-3.2 7.5-3.3-4.4 9.4-10 11.9-13.6 11.2-4.3-.8-6.3-4.6-5.6-7.9 1-4.7 5.7-5.9 8-.5 4.3-8.7-3-11.4-7.6-8.8 7.1-7.2 7.9-13.5 2.1-21.1-8 6.1-8.1 12.3-4.5 20.8-4.7-5.4-12.1-2.5-9.5 6.2 3.4-5.2 7.9-2 7.2 3.1-.6 4.3-6.4 7.8-13.5 7.2-10.3-.9-10.9-8-11.2-13.8 2.5-.5 7.1 1.8 11 7.3L80.2 60c-4.1 4.4-8 5.3-12.3 5.4 1.4-4.4 8-11.6 8-11.6H55.5s6.4 7.2 7.9 11.6c-4.2-.1-8-1-12.3-5.4l1.4 16.4c3.9-5.5 8.5-7.7 10.9-7.3-.3 5.8-.9 12.8-11.1 13.8-7.2.6-12.9-2.9-13.5-7.2-.7-5 3.8-8.3 7.1-3.1 2.7-8.7-4.6-11.6-9.4-6.2 3.7-8.5 3.6-14.7-4.6-20.8-5.8 7.6-5 13.9 2.2 21.1-4.7-2.6-11.9.1-7.7 8.8 2.3-5.5 7.1-4.2 8.1.5.7 3.3-1.3 7.1-5.7 7.9-3.5.7-9-1.8-13.5-11.2 2.5.1 4.7 1.3 7.5 3.3l-4.7-15.4c-1.2 4.4-2.7 7.2-4.3 8.7-1.1-3-.9-5.3 0-10.2l-9.5 3.4c5 6.9 9.9 16.7 14 33.5 14.8-2.1 30.8-3.2 47.7-3.2z"
      />
    </svg>
  );
}

/* ---------- Page ---------- */

const LINK = "text-[#1d70b8] underline decoration-1 underline-offset-4";
const FOOTER_LINK = "underline decoration-1 underline-offset-4";
const H2 = "text-[52px] leading-[58px] font-bold";

const DETAILS: { name: string; value: string; href?: string }[] = [
  { name: "School type", value: "Academy" },
  { name: "Education phase", value: "Primary" },
  { name: "School size", value: "294 pupils" },
  { name: "Age range", value: "5 to 11" },
  { name: "Ofsted report", value: "View ofsted report", href: "#ofsted" },
  { name: "School website", value: "school website link (opens in a new window)", href: "#website" },
  { name: "Contact email", value: "email@bronsonalcottacademy.org.uk", href: "mailto:email@bronsonalcottacademy.org.uk" },
];

const PRIDE = [
  "our recent OFSTED inspection upgrade to ‘good’ (April 2019).",
  "being an oversubscribed and popular school, located close to the M42 and M6, in easy reach of Coventry, Warwick and Birmingham.",
  "being a highly innovative, driven, inspirational and ambitious organisation with a clear vision for achieving success.",
  "being part of the Springwood Academies Trust and its associated teaching school. This facilitates an opportunity to play to your strengths and provide excellent collaboration between colleagues and leaders, access to\neffective CPD and the chance to develop professionally. The - Trust is\ncommitted to invest in and develop all staff and, most importantly, bring\nabout the best possible outcomes for our students who deserve the very\nbest.",
  "our strong commitment to staff wellbeing and recognition. We can offer\nyou a range of benefits which include cycle to work and childcare voucher\nschemes, free parking, an employee discount scheme, a laptop and access\nto the on-site swimming pool.",
];

function Container({ className = "", children }: { className?: string; children: React.ReactNode }) {
  return <div className={`mx-auto max-w-[1392px] ${className}`}>{children}</div>;
}

export default function App() {
  return (
    <div className="bg-white font-['Roboto',sans-serif] text-[26px] leading-9 text-[#0b0c0c]">
      <header className="border-b-[14px] border-[#1d70b8] bg-[#0b0c0c] text-white">
        <Container className="flex h-[73px] items-baseline pt-4">
          <CrownLogo />
          <a href="#home" className="ml-[10px] font-['Inter',sans-serif] text-[40px] leading-10 font-bold">GOV.UK</a>
          <a href="#service" className="ml-[18px] text-[33px] leading-10">Find teaching jobs</a>
          <nav aria-label="Account" className="ml-auto flex gap-7 text-[23px] font-bold">
            <a href="#create">Create account</a>
            <a href="#sign-in">Sign in</a>
          </nav>
        </Container>
      </header>

      <Container className="flex h-[65px] items-center gap-[14px] text-[22px]">
        <strong className="bg-[#1d70b8] px-3 text-[23px] tracking-[1px] text-white">BETA</strong>
        <span>
          This is a new service – your <a href="#feedback" className={LINK}>feedback</a> will help us to improve it.
        </span>
      </Container>

      <nav aria-label="Main" className="bg-[#f3f2f1]">
        <Container className="flex gap-7 text-[27px] font-bold text-[#1d70b8]">
          <a href="#jobs" className="flex h-20 items-center border-y-[7px] border-transparent">Jobs</a>
          <a href="#schools" aria-current="page" className="flex h-20 items-center border-y-[7px] border-t-transparent border-b-[#1d70b8]">Schools</a>
        </Container>
      </nav>

      <Container className="pt-[73px] pb-[87px]">
        <main className="max-w-[913px]">
          <h1 className="text-[70px] leading-[72px] font-bold">Bronson Alcott Academy</h1>
          <p className="mt-2">Friendship Way, London E15 2JQ</p>
          <div className="mt-7 flex gap-5">
            <button type="button" className="h-[58px] border-b-[3px] border-[#002d18] bg-[#00703c] px-5 text-white">Send profile to school</button>
            <button type="button" className="h-[58px] border-b-[3px] border-[#929191] bg-[#f3f2f1] px-5">Add school to favourites</button>
          </div>
          <p className="mt-[45px]">
            <a href="#vacancies" className="text-[#4c2c92] underline decoration-1 underline-offset-4">2 jobs at Bronson Alcott Academy</a>
          </p>

          <h2 className={`mt-[58px] ${H2}`}>About</h2>
          <table className="mt-[43px] w-full table-fixed border-collapse text-left">
            <tbody>
              {DETAILS.map((row) => (
                <tr key={row.name} className="border-b border-[#b1b4b6]">
                  <th scope="row" className="w-[285px] py-[15px] text-[27px] font-bold">{row.name}</th>
                  <td className="py-[15px]">{row.href ? <a href={row.href} className={LINK}>{row.value}</a> : row.value}</td>
                </tr>
              ))}
            </tbody>
          </table>

          <p className="mt-[42px]">
            Bronson Alcott Academy is at the heart of a growing family of outstanding schools. This support allows us unique relationships within London, its independent schools and seats of learning. We pride ourselves on:
          </p>
          <ul className="mt-[30px] list-disc space-y-2 pl-[29px] whitespace-pre-line">
            {PRIDE.map((item) => <li key={item.slice(0, 24)}>{item}</li>)}
          </ul>

          <h2 className={`mt-[58px] ${H2}`}>How early career teachers are supported</h2>
          <p className="mt-11">Information goes here about how early career teachers are supported.</p>

          <h2 className={`mt-[58px] ${H2}`}>Location</h2>
          <p className="mt-11 mb-7">Friendship Way, London E15 2JQ</p>
          <StreetMap />

          <h2 className={`mt-[49px] ${H2}`}>Additional documents</h2>
          <ul className="mt-11 list-disc pl-[29px]">
            <li><a href="#brochure" className={LINK}>School brochure (PDF, 3MB)</a></li>
          </ul>
        </main>
      </Container>

      <footer className="border-t border-[#b1b4b6] bg-[#f3f2f1] pt-[58px] pb-[74px] text-[23px] leading-[29px]">
        <Container className="flex items-end justify-between">
          <div>
            <div className="flex gap-7">
              <a href="#kit" className={FOOTER_LINK}>GOV.UK Prototype Kit v12.0.4</a>
              <a href="#clear" className={FOOTER_LINK}>Clear data</a>
            </div>
            <div className="mt-7 flex items-center gap-5">
              <svg viewBox="0 0 60 24" className="h-6 w-[60px]" role="img" aria-label="Open Government Licence">
                <text x="-1 18 41" y="23" fontSize="30" fontWeight="900" fill="#0b0c0c" stroke="#0b0c0c" className="font-['Inter',sans-serif]">OGL</text>
              </svg>
              <p>
                All content is available under the <a href="#licence" className={FOOTER_LINK}>Open Government Licence v3.0</a>, except where otherwise stated
              </p>
            </div>
          </div>
          <div className="flex flex-col items-center gap-[15px]">
            <Crest />
            <a href="#copyright" className={FOOTER_LINK}>© Crown copyright</a>
          </div>
        </Container>
      </footer>
    </div>
  );
}
